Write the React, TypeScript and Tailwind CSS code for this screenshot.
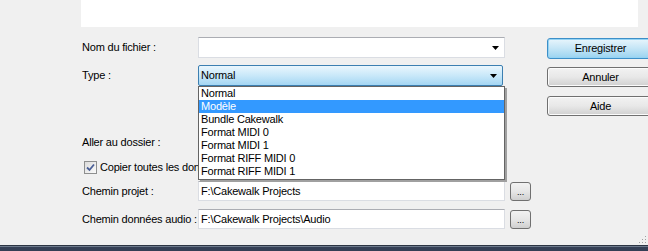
import React from "react";

const font = { fontFamily: '"Liberation Sans", Arial, sans-serif' };

function Arrow() {
  return (
    <svg width="7" height="4" viewBox="0 0 7 4" className="shrink-0">
      <path d="M0 0H7L3.5 4Z" fill="#000" />
    </svg>
  );
}

function Label({ children }: { children: React.ReactNode }) {
  return <div className="w-[116px] shrink-0 whitespace-nowrap">{children}</div>;
}

function TextBox({ value }: { value: string }) {
  return (
    <div className="w-[307px] h-[20px] bg-white border border-[#dadde3] border-t-[#abadb3] flex items-center pl-[2px]">
      {value}
    </div>
  );
}

function BrowseButton() {
  return (
    <button className="ml-[5px] w-[21px] h-[19px] rounded-[3px] border border-[#707070] bg-gradient-to-b from-[#f2f2f2] via-[#e6e6e6] to-[#cfcfcf] flex items-end justify-center pb-[3px] text-[9px] leading-none">
      ...
    </button>
  );
}

function WinButton({ label, focused }: { label: string; focused?: boolean }) {
  return (
    <button
      className={
        focused
          ? "w-[107px] h-[21px] rounded-[3px] border border-[#3c8fc8] shadow-[inset_0_0_0_1px_#94d3f4] bg-gradient-to-b from-[#e8f5fc] via-[#c4e5f6] to-[#9ad3f0] flex items-center justify-center"
          : "w-[107px] h-[20px] rounded-[3px] border border-[#707070] shadow-[inset_0_0_0_1px_#fbfbfb] bg-gradient-to-b from-[#f2f2f2] via-[#e8e8e8] to-[#d0d0d0] flex items-center justify-center"
      }
    >
      {label}
    </button>
  );
}

const types = [
  "Normal",
  "Modèle",
  "Bundle Cakewalk",
  "Format MIDI 0",
  "Format MIDI 1",
  "Format RIFF MIDI 0",
  "Format RIFF MIDI 1",
];

export default function App() {
  return (
    <div
      className="relative w-[648px] h-[251px] overflow-hidden bg-[#f0f0f0] text-black text-[11px] tracking-[-0.2px] flex flex-col"
      style={font}
    >
      {/* list area */}
      <div className="ml-[81px] w-[557px] h-[27px] bg-white shrink-0" />

      <div className="flex pl-[82px]">
        {/* form */}
        <div className="flex flex-col">
          <div className="mt-[10px] h-[21px] flex items-center">
            <Label>Nom du fichier :</Label>
            <div className="w-[307px] h-[21px] bg-white border border-[#dadde3] border-t-[#abadb3] flex items-center justify-end pr-[5px]">
              <Arrow />
            </div>
          </div>

          <div className="mt-[7px] h-[21px] flex items-center">
            <Label>Type :</Label>
            <div className="w-[305px] h-[21px] rounded-[2px] border border-[#3c7fb1] bg-gradient-to-b from-[#eaf6fd] via-[#c9e8f9] to-[#a4d6f3] flex items-center justify-between pl-[2px] pr-[5px]">
              <span>Normal</span>
              <Arrow />
            </div>
          </div>

          <div className="mt-[46px] h-[21px] flex items-center">
            <Label>Aller au dossier :</Label>
            <div className="w-[307px] h-[21px] bg-white border border-[#707070] rounded-[2px]" />
          </div>

          <div className="mt-[8px] h-[13px] flex items-center">
            <div className="ml-[2px] w-[13px] h-[13px] border border-[#8e8f8f] bg-gradient-to-br from-[#dcdcdc] to-[#fafafa] flex items-center justify-center shrink-0">
              <svg width="9" height="9" viewBox="0 0 9 9">
                <path d="M1 4.5L3.5 7L8 1.5" stroke="#4a5f97" strokeWidth="1.8" fill="none" />
              </svg>
            </div>
            {/* the open dropdown hides the rest of this label */}
            <span className="ml-[3px] w-[99px] overflow-hidden whitespace-nowrap">
              Copier toutes les données audio
            </span>
          </div>

          <div className="mt-[7px] h-[20px] flex items-center">
            <Label>Chemin projet :</Label>
            <TextBox value="F:\Cakewalk Projects" />
            <BrowseButton />
          </div>

          <div className="mt-[8px] h-[20px] flex items-center">
            <Label>Chemin données audio :</Label>
            <TextBox value="F:\Cakewalk Projects\Audio" />
            <BrowseButton />
          </div>
        </div>

        {/* buttons */}
        <div className="ml-[16px] flex flex-col gap-[8px] pt-[11px]">
          <WinButton label="Enregistrer" focused />
          <WinButton label="Annuler" />
          <div className="mt-[1px]">
            <WinButton label="Aide" />
          </div>
        </div>
      </div>

      {/* open type dropdown */}
      <div className="absolute left-[198px] top-[86px] w-[307px] bg-white border border-[#646464] shadow-[2px_2px_0_#a0a0a0] pb-[1px]">
        {types.map((t) => (
          <div
            key={t}
            className={
              t === "Modèle"
                ? "h-[13px] leading-[13px] pl-[2px] bg-[#3399ff] text-white"
                : "h-[13px] leading-[13px] pl-[2px]"
            }
          >
            {t}
          </div>
        ))}
      </div>

      {/* size grip */}
      <svg className="absolute right-[1px] bottom-[7px]" width="9" height="9" viewBox="0 0 9 9">
        {[
          [7, 1],
          [4, 4],
          [7, 4],
          [1, 7],
          [4, 7],
          [7, 7],
        ].map(([x, y], i) => (
          <rect key={i} x={x} y={y} width="1" height="1" fill="#a0a0a0" />
        ))}
      </svg>

      {/* taskbar edge */}
      <div className="mt-auto shrink-0">
        <div className="h-[1px] bg-[#2b3443]" />
        <div className="h-[1px] bg-[#6d7a8c]" />
        <div className="h-[4px] bg-[#343f55]" />
      </div>
    </div>
  );
}
